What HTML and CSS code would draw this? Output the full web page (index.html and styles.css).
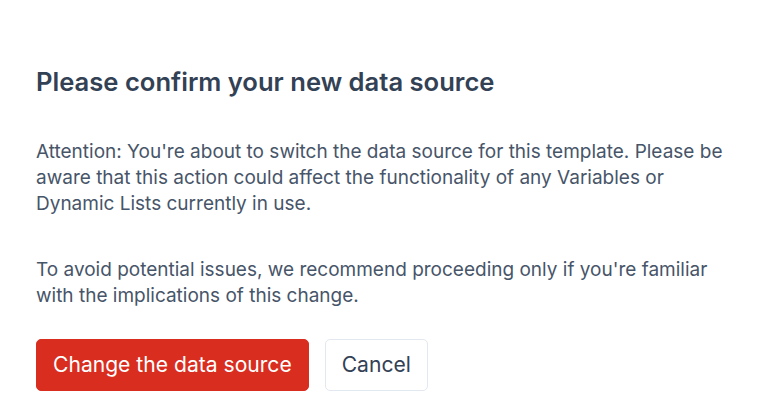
FILE: index.html
```html
<!DOCTYPE html>
<html>
<head>
<meta charset="utf-8">
<link rel="stylesheet" href="styles.css">
</head>
<body>
<div class="dialog">
  <h1 class="title">Please confirm your new data source</h1>
  <p class="text">Attention: You're about to switch the data source for this template. Please be aware that this action could affect the functionality of any Variables or Dynamic Lists currently in use.</p>
  <p class="text second">To avoid potential issues, we recommend proceeding only if you're familiar with the implications of this change.</p>
  <div class="actions">
    <button class="btn btn-danger">Change the data source</button>
    <button class="btn btn-cancel">Cancel</button>
  </div>
</div>
</body>
</html>
```
FILE: styles.css
```css
* { box-sizing: border-box; }
html, body { margin: 0; padding: 0; background: #fff; }
body { font-family: Inter, "Noto Sans", sans-serif; }
.dialog { padding: 66px 36px 0 36px; width: 772px; }
.title { margin: 0; font-size: 25.6px; line-height: 32px; font-weight: 600; color: #334155; }
.text { margin: 41px 0 0 0; font-size: 19px; line-height: 26px; color: #475569; }
.text.second { margin-top: 40px; }
.actions { display: flex; gap: 16px; margin-top: 30px; }
.btn { font-family: inherit; font-size: 21.1px; line-height: 28px; height: 52px; padding: 0 16px; border-radius: 5px; cursor: pointer; }
.btn-danger { background: #d92d20; color: #fff; border: 1px solid #d92d20; }
.btn-cancel { background: #fff; color: #334155; border: 1px solid #e2e8f0; }
```
